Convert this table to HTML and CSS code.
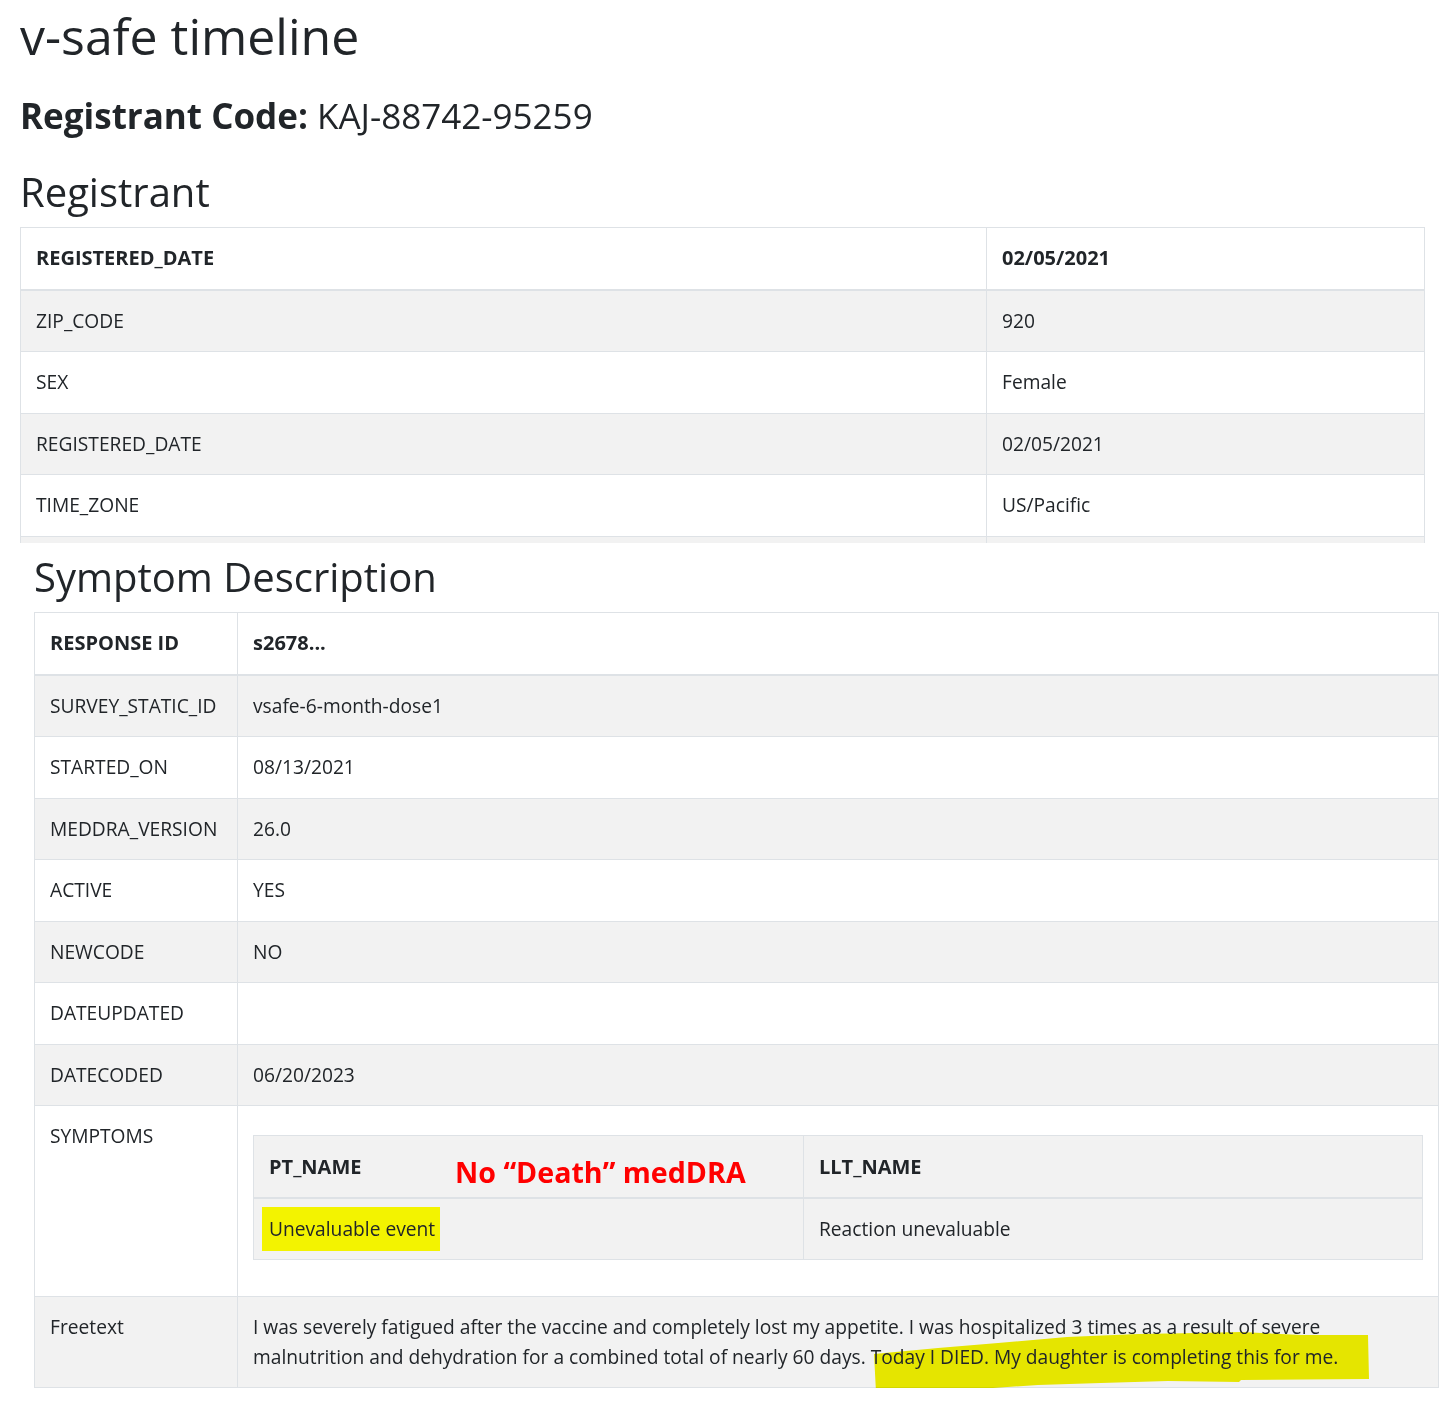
FILE: index.html
```html
<!DOCTYPE html>
<html lang="en">
<head>
<meta charset="utf-8">
<title>v-safe timeline</title>
<link rel="stylesheet" href="styles.css">
</head>
<body>
<main class="page">
  <h1 class="title">v-safe timeline</h1>
  <h3 class="code"><strong>Registrant Code:</strong> KAJ-88742-95259</h3>
  <h2 class="section-title">Registrant</h2>
  <div class="clip">
    <table class="grid grid-registrant">
      <colgroup><col class="col-reg-key"><col class="col-reg-val"></colgroup>
      <thead>
        <tr><th>REGISTERED_DATE</th><th>02/05/2021</th></tr>
      </thead>
      <tbody>
        <tr><td>ZIP_CODE</td><td>920</td></tr>
        <tr><td>SEX</td><td>Female</td></tr>
        <tr><td>REGISTERED_DATE</td><td>02/05/2021</td></tr>
        <tr><td>TIME_ZONE</td><td>US/Pacific</td></tr>
        <tr><td>&nbsp;</td><td>&nbsp;</td></tr>
      </tbody>
    </table>
  </div>

  <section class="symptoms">
    <h2 class="section-title">Symptom Description</h2>
    <table class="grid grid-symptom">
      <colgroup><col class="col-sym-key"><col class="col-sym-val"></colgroup>
      <thead>
        <tr><th>RESPONSE ID</th><th>s2678...</th></tr>
      </thead>
      <tbody>
        <tr><td>SURVEY_STATIC_ID</td><td>vsafe-6-month-dose1</td></tr>
        <tr><td>STARTED_ON</td><td>08/13/2021</td></tr>
        <tr><td>MEDDRA_VERSION</td><td>26.0</td></tr>
        <tr><td>ACTIVE</td><td>YES</td></tr>
        <tr><td>NEWCODE</td><td>NO</td></tr>
        <tr><td>DATEUPDATED</td><td></td></tr>
        <tr><td>DATECODED</td><td>06/20/2023</td></tr>
        <tr>
          <td>SYMPTOMS</td>
          <td>
            <table class="grid grid-nested">
              <colgroup><col class="col-pt"><col class="col-llt"></colgroup>
              <thead>
                <tr>
                  <th class="pt-head">PT_NAME<span class="note">No “Death” medDRA</span></th>
                  <th>LLT_NAME</th>
                </tr>
              </thead>
              <tbody>
                <tr><td><mark class="hl">Unevaluable event</mark></td><td>Reaction unevaluable</td></tr>
              </tbody>
            </table>
          </td>
        </tr>
        <tr>
          <td>Freetext</td>
          <td class="freetext">
            <svg class="scribble" width="1140" height="110" viewBox="0 0 1140 110" aria-hidden="true">
              <polygon points="636,57 700,51 760,46 829,40 900,37 960,36 1003,35 1063,38 1130,38 1131,82 1003,83 1001,85 930,84 863,86 800,88 740,92 680,95 638,95" fill="#f2f200"/>
            </svg>
            <span class="freetext-text">I was severely fatigued after the vaccine and completely lost my appetite. I was hospitalized 3 times as a result of severe malnutrition and dehydration for a combined total of nearly 60 days. Today I DIED. My daughter is completing this for me.</span>
          </td>
        </tr>
      </tbody>
    </table>
  </section>
</main>
</body>
</html>
```

FILE: styles.css
```css
* { box-sizing: border-box; }

html, body {
  margin: 0;
  padding: 0;
  background: #ffffff;
}

body {
  font-family: "Open Sans", "Noto Sans", sans-serif;
  font-size: 19.2px;
  line-height: 30px;
  color: #212529;
}

.page {
  padding: 6px 0 0 20px;
}

.title {
  font-size: 50px;
  font-weight: 500;
  line-height: 1.2;
  margin: 0 0 29px;
}

.code {
  font-size: 35px;
  font-weight: 400;
  line-height: 1.2;
  margin: 0 0 31px;
}

.code strong {
  font-weight: 700;
}

.section-title {
  font-size: 40px;
  font-weight: 500;
  line-height: 1.2;
  margin: 0 0 11px;
}

.clip {
  width: 1405px;
  height: 316px;
  overflow: hidden;
}

.grid {
  border-collapse: collapse;
  width: 1404px;
  table-layout: fixed;
}

.grid th,
.grid td {
  border: 1px solid #dee2e6;
  padding: 15.25px 16px 15.25px 15px;
  text-align: left;
  vertical-align: top;
  font-weight: 400;
}

.grid thead th {
  font-size: 20px;
  font-weight: 700;
  border-bottom: 2px solid #dee2e6;
}

.grid > tbody > tr:nth-child(odd) > td {
  background: #f2f2f2;
}

.col-reg-key { width: 966px; }
.col-reg-val { width: 438px; }

.symptoms {
  margin-left: 14px;
  padding-top: 10px;
}

.col-sym-key { width: 203px; }
.col-sym-val { width: 1201px; }

.grid-nested {
  width: 100%;
  margin: 14px 0 20px;
  background: #f2f2f2;
}

.grid-nested th,
.grid-nested td {
  background: #f2f2f2;
}

.col-pt { width: 550px; }
.col-llt { width: 619px; }

.pt-head {
  position: relative;
}

.note {
  position: absolute;
  left: 201px;
  top: 22px;
  font-size: 28.6px;
  line-height: 1;
  font-weight: 700;
  color: #ff0000;
  white-space: nowrap;
}

.hl {
  background: #f3f300;
  color: inherit;
  padding: 8px 5px 9px 7px;
  margin-left: -7px;
}

.freetext {
  position: relative;
}

.scribble {
  position: absolute;
  left: 0;
  top: 0;
  overflow: visible;
  mix-blend-mode: multiply;
  pointer-events: none;
}

.freetext-text {
  position: relative;
}
```
